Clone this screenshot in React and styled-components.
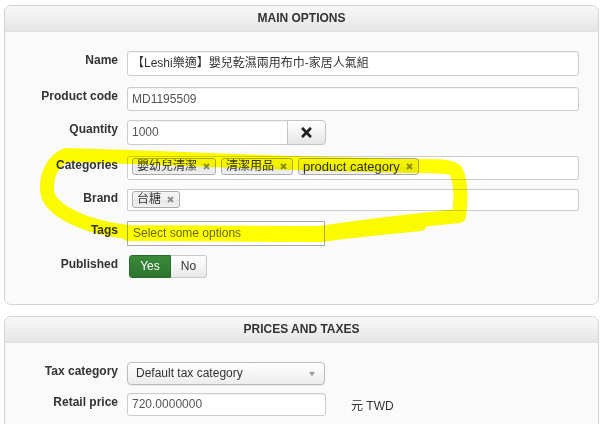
import React from 'react';
import styled, { createGlobalStyle } from 'styled-components';
import { FaTimes } from 'react-icons/fa';

const GlobalStyle = createGlobalStyle`
    html, body {
        margin: 0;
        background: #fff;
    }
    body {
        font-family: "Liberation Sans", Arial, "Noto Sans CJK TC", sans-serif;
        font-size: 12px;
        color: #333;
    }
`;

const Page = styled.div`
    position: relative;
    width: 603px;
    height: 424px;
    overflow: hidden;
    padding: 5px 4px 0 4px;
    box-sizing: border-box;
`;

const Panel = styled.section`
    border: 1px solid #d3d3d3;
    border-radius: 7px;
    background: #fafafa;
    overflow: hidden;
    margin-bottom: 11px;
`;

const PanelHeader = styled.div`
    height: 25px;
    line-height: 25px;
    text-align: center;
    font-weight: bold;
    font-size: 12px;
    color: #333;
    text-transform: uppercase;
    background: linear-gradient(#f8f8f8, #e6e6e6);
    border-bottom: 1px solid #e0e0e0;
`;

const PanelBody = styled.div`
    padding: 19px 19px 26px 0;
`;

const Row = styled.div`
    display: grid;
    grid-template-columns: 113px 1fr;
    column-gap: 9px;
    margin-bottom: ${p => p.$gap ?? 10}px;
    &:last-child {
        margin-bottom: 0;
    }
`;

const Label = styled.label`
    text-align: right;
    font-weight: bold;
    font-size: 12px;
    line-height: 16px;
    padding-top: 1px;
    color: #333;
`;

const Field = styled.div`
    display: flex;
    align-items: center;
`;

const Input = styled.div`
    box-sizing: border-box;
    width: ${p => p.$width ? `${p.$width}px` : '100%'};
    height: ${p => p.$height ?? 25}px;
    line-height: ${p => (p.$height ?? 25) - 2}px;
    padding: 0 4px;
    border: 1px solid #ccc;
    border-radius: ${p => p.$joined ? '3px 0 0 3px' : '3px'};
    background: #fff;
    box-shadow: inset 0 1px 1px rgba(0, 0, 0, 0.05);
    color: ${p => p.$dark ? '#333' : '#555'};
    font-size: 12px;
    white-space: nowrap;
    overflow: hidden;
`;

const IconButton = styled.button`
    box-sizing: border-box;
    width: 39px;
    height: 25px;
    margin-left: -1px;
    border: 1px solid #c4c4c4;
    border-radius: 0 4px 4px 0;
    background: linear-gradient(#fff, #e6e6e6);
    color: #222;
    display: flex;
    align-items: center;
    justify-content: center;
    padding: 0;
`;

const ChoiceList = styled.div`
    box-sizing: border-box;
    width: 100%;
    height: ${p => p.$height}px;
    border: 1px solid #ccc;
    border-radius: 2px;
    background: #fff;
    display: flex;
    align-items: flex-start;
    padding-top: 1px;
`;

const Choice = styled.span`
    position: relative;
    box-sizing: border-box;
    height: 17px;
    line-height: 15px;
    margin-left: ${p => p.$first ? 4 : 5}px;
    padding: 0 18px 0 4px;
    border: 1px solid #aaa;
    border-radius: 3px;
    background: linear-gradient(#f4f4f4 20%, #f0f0f0 50%, #e8e8e8 52%, #eeeeee);
    box-shadow: inset 0 0 2px #fff;
    color: #333;
    font-size: ${p => p.$latin ? 13 : 12}px;
    white-space: nowrap;
`;

const ChoiceClose = styled.svg`
    position: absolute;
    right: 5px;
    top: 4px;
    width: 7px;
    height: 7px;
`;

const ChosenInput = styled.div`
    box-sizing: border-box;
    width: 198px;
    height: 25px;
    line-height: 23px;
    padding: 0 5px;
    border: 1px solid #aaa;
    background: #fff;
    color: #666;
    font-size: 12px;
`;

const Toggle = styled.div`
    display: flex;
    margin-left: 2px;
    height: 23px;
`;

const ToggleOption = styled.span`
    box-sizing: border-box;
    height: 23px;
    line-height: 21px;
    width: ${p => p.$width}px;
    text-align: center;
    font-size: 12px;
    border: 1px solid ${p => p.$active ? '#2a6b2a' : '#c8c8c8'};
    border-radius: ${p => p.$active ? '3px 0 0 3px' : '0 3px 3px 0'};
    background: ${p => p.$active ? 'linear-gradient(#3b8a3b, #2e742e)' : 'linear-gradient(#fff, #e8e8e8)'};
    color: ${p => p.$active ? '#fff' : '#333'};
    ${p => p.$active ? '' : 'border-left: none;'}
`;

const Select = styled.div`
    position: relative;
    box-sizing: border-box;
    width: 198px;
    height: 23px;
    line-height: 21px;
    padding: 0 8px;
    border: 1px solid #bbb;
    border-radius: 4px;
    background: linear-gradient(#fff, #ececec);
    box-shadow: 0 1px 1px rgba(0, 0, 0, 0.08);
    color: #333;
    font-size: 12px;
`;

const Caret = styled.span`
    position: absolute;
    right: 9px;
    top: 9px;
    width: 0;
    height: 0;
    border-left: 3px solid transparent;
    border-right: 3px solid transparent;
    border-top: 4px solid #999;
`;

const Unit = styled.span`
    margin-left: 25px;
    font-size: 12px;
    color: #333;
`;

const Marker = styled.svg`
    position: absolute;
    left: 0;
    top: 0;
    width: 603px;
    height: 424px;
    pointer-events: none;
    mix-blend-mode: multiply;
`;

function Tag({ children, first, latin }) {
    return (
        <Choice $first={first} $latin={latin}>
            {children}
            <ChoiceClose viewBox="0 0 7 7">
                <path d="M1 1 L6 6 M6 1 L1 6" stroke="#8a8a8a" strokeWidth="1.8" />
            </ChoiceClose>
        </Choice>
    );
}

function App() {
    return (
        <Page>
            <GlobalStyle />
            <Panel>
                <PanelHeader>Main options</PanelHeader>
                <PanelBody>
                    <Row $gap={11}>
                        <Label>Name</Label>
                        <Input $dark>【Leshi樂適】嬰兒乾濕兩用布巾-家居人氣組</Input>
                    </Row>
                    <Row $gap={9}>
                        <Label>Product code</Label>
                        <Input $height={24}>MD1195509</Input>
                    </Row>
                    <Row $gap={11}>
                        <Label>Quantity</Label>
                        <Field>
                            <Input $width={161} $joined>1000</Input>
                            <IconButton><FaTimes size={15} /></IconButton>
                        </Field>
                    </Row>
                    <Row $gap={9}>
                        <Label>Categories</Label>
                        <ChoiceList $height={24}>
                            <Tag first>嬰幼兒清潔</Tag>
                            <Tag>清潔用品</Tag>
                            <Tag latin>product category</Tag>
                        </ChoiceList>
                    </Row>
                    <Row $gap={10}>
                        <Label>Brand</Label>
                        <ChoiceList $height={22}>
                            <Tag first>台糖</Tag>
                        </ChoiceList>
                    </Row>
                    <Row $gap={9}>
                        <Label>Tags</Label>
                        <Field>
                            <ChosenInput>Select some options</ChosenInput>
                        </Field>
                    </Row>
                    <Row>
                        <Label>Published</Label>
                        <Toggle>
                            <ToggleOption $active $width={42}>Yes</ToggleOption>
                            <ToggleOption $width={36}>No</ToggleOption>
                        </Toggle>
                    </Row>
                </PanelBody>
            </Panel>

            <Panel>
                <PanelHeader>Prices and taxes</PanelHeader>
                <PanelBody>
                    <Row $gap={8}>
                        <Label>Tax category</Label>
                        <Field>
                            <Select>Default tax category<Caret /></Select>
                        </Field>
                    </Row>
                    <Row>
                        <Label>Retail price</Label>
                        <Field>
                            <Input $width={199} $height={23}>720.0000000</Input>
                            <Unit>元 TWD</Unit>
                        </Field>
                    </Row>
                </PanelBody>
            </Panel>

            <Marker viewBox="0 0 603 424">
                <path
                    d="M66 155 C54 160 46 174 47 190 C48 208 78 226 128 232 L320 233 C360 227 410 221 459 216 C461 200 461 182 456 171 C451 165 432 166 410 166 L290 163 L130 157 L66 155"
                    fill="none"
                    stroke="#ffff00"
                    strokeWidth="14"
                    strokeLinecap="round"
                    strokeLinejoin="round"
                />
                <path
                    d="M128 234 L320 235 C350 231 380 228 420 224"
                    fill="none"
                    stroke="#ffff00"
                    strokeWidth="14"
                    strokeLinecap="round"
                />
            </Marker>
        </Page>
    );
}

export default App;
